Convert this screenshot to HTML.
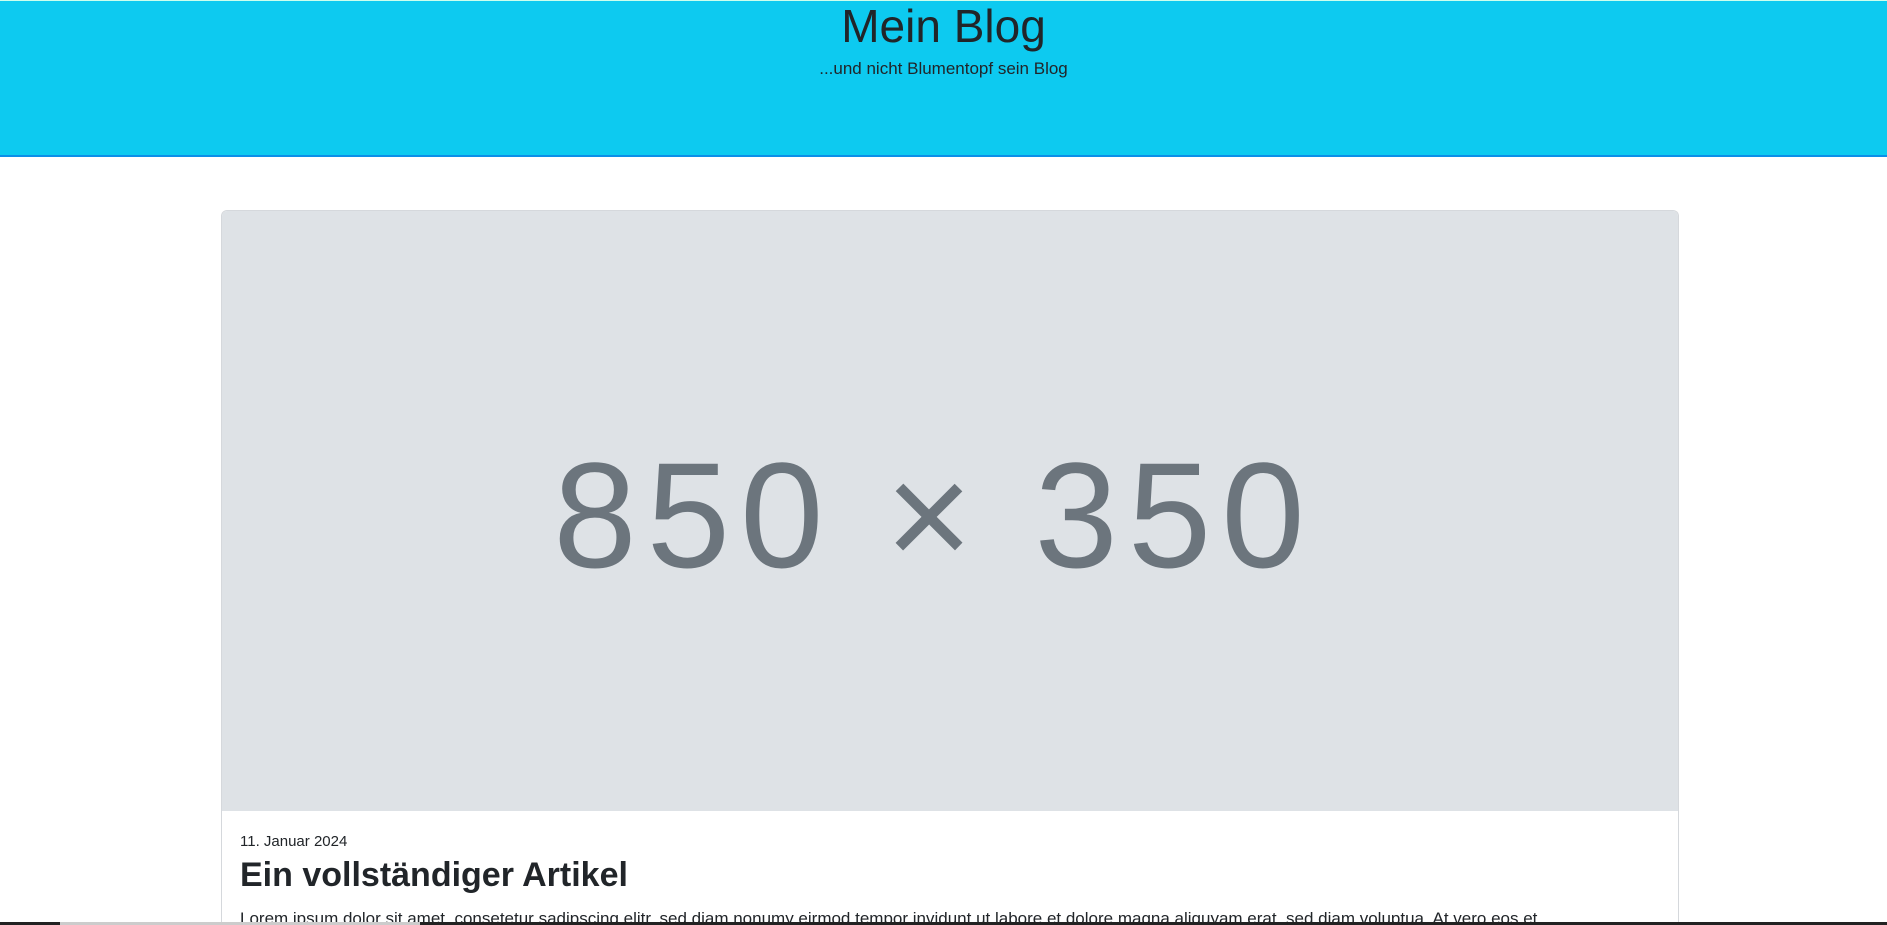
<!DOCTYPE html>
<html><head><meta charset="utf-8"><style>
html,body{margin:0;padding:0;width:1887px;height:925px;overflow:hidden;background:#fff;font-family:"Liberation Sans",sans-serif;color:#212529}
.hdr{position:absolute;left:0;top:0;width:1887px;height:157px;background:#0dcaf0;border-top:1px solid #cfe;border-bottom:2px solid #0b8fe8;box-sizing:border-box}
.hdr h1{position:absolute;top:0;left:0;width:100%;margin:0;text-align:center;font-weight:500;font-size:46px;line-height:50px}
.hdr p{position:absolute;top:58px;left:0;width:100%;margin:0;text-align:center;font-size:17px}
.card{position:absolute;left:221px;top:210px;width:1458px;height:715px;border:1px solid #d5d8dc;border-bottom:none;border-radius:6px 6px 0 0;overflow:hidden;box-sizing:border-box}
.img{height:600px;background:#dee2e6}
.date{position:absolute;left:18px;top:622px;font-size:15px}
.title{position:absolute;left:18px;top:645px;font-size:34px;font-weight:bold;margin:0}
.lorem{position:absolute;left:18px;top:698px;font-size:17px;white-space:nowrap}
.bar{position:absolute;left:0;top:922px;width:1887px;height:3px;background:#ccc}
</style></head><body>
<div class="hdr"><h1>Mein Blog</h1><p>...und nicht Blumentopf sein Blog</p></div>
<div class="card">
<div class="img"><svg width="1458" height="600"><text x="712" y="356" text-anchor="middle" font-family="Liberation Sans,sans-serif" font-size="150" letter-spacing="10" fill="#6c757d">850 × 350</text></svg></div>
<div class="date">11. Januar 2024</div>
<h2 class="title">Ein vollständiger Artikel</h2>
<div class="lorem">Lorem ipsum dolor sit amet, consetetur sadipscing elitr, sed diam nonumy eirmod tempor invidunt ut labore et dolore magna aliquyam erat, sed diam voluptua. At vero eos et</div>
</div>
<div class="bar"><div style="position:absolute;left:0;width:60px;height:3px;background:#222"></div><div style="position:absolute;left:420px;right:0;height:3px;background:#222"></div></div>
</body></html>
